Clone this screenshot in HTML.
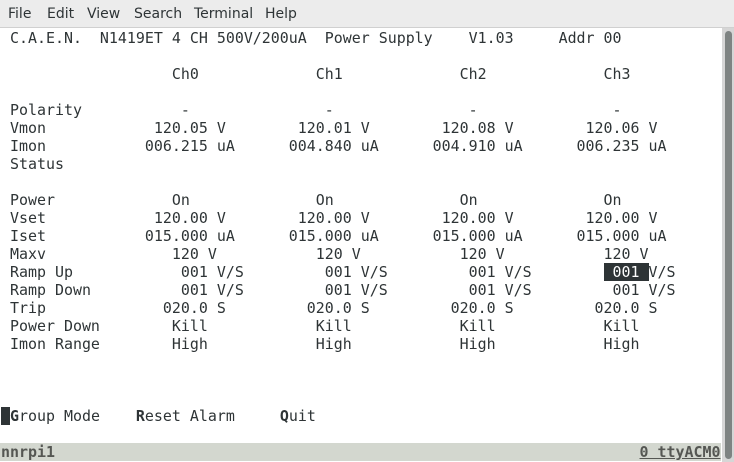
<!DOCTYPE html>
<html><head><meta charset="utf-8"><style>
html,body{margin:0;padding:0;width:734px;height:462px;overflow:hidden;background:#fff;}
.menu{position:absolute;left:0;top:0;width:734px;height:27px;background:#ececec;border-bottom:1px solid #d0d0d0;font-family:"DejaVu Sans","Liberation Sans",sans-serif;font-size:14px;color:#2e3436;}
.menu span{position:absolute;top:6px;}
pre{position:absolute;left:1px;top:29px;margin:0;font-family:"DejaVu Sans Mono","Liberation Mono",monospace;font-size:14.95px;line-height:18px;color:#2e3436;white-space:pre;}
.hl{background:#2e3436;color:#fff;}
.cur{background:#2e3436;color:#2e3436;}
.status{position:absolute;left:0;top:443px;width:721px;height:18px;background:#d3d7cf;}
.st{color:#555753;font-weight:bold;}
.u{text-decoration:underline;}
.trough{position:absolute;left:722px;top:28px;width:12px;height:434px;background:#d6d6d6;}
.thumb{position:absolute;left:725px;top:31px;width:7px;height:428px;background:#7e8382;border-radius:4px;}
</style></head><body>
<div class="menu"><span style="left:8px">File</span><span style="left:47px">Edit</span><span style="left:87px">View</span><span style="left:134px">Search</span><span style="left:194px">Terminal</span><span style="left:265px">Help</span></div>
<div class="status"></div>
<div class="trough"></div><div class="thumb"></div>
<pre> C.A.E.N.  N1419ET 4 CH 500V/200uA  Power Supply    V1.03     Addr 00

                   Ch0             Ch1             Ch2             Ch3

 Polarity           -               -               -               -
 Vmon            120.05 V        120.01 V        120.08 V        120.06 V
 Imon           006.215 uA      004.840 uA      004.910 uA      006.235 uA
 Status

 Power             On              On              On              On
 Vset            120.00 V        120.00 V        120.00 V        120.00 V
 Iset           015.000 uA      015.000 uA      015.000 uA      015.000 uA
 Maxv              120 V           120 V           120 V           120 V
 Ramp Up            001 V/S         001 V/S         001 V/S        <span class="hl"> 001 </span>V/S
 Ramp Down          001 V/S         001 V/S         001 V/S         001 V/S
 Trip             020.0 S         020.0 S         020.0 S         020.0 S
 Power Down        Kill            Kill            Kill            Kill
 Imon Range        High            High            High            High



<span class="cur">_</span><b>G</b>roup Mode    <b>R</b>eset Alarm     <b>Q</b>uit

<span class="st">nnrpi1                                                                 <span class="u">0 ttyACM0</span></span></pre>
</body></html>
